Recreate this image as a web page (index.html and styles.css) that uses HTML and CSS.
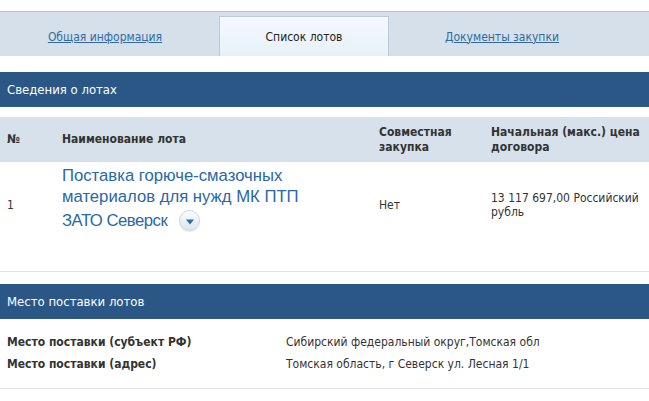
FILE: index.html
```html
<!DOCTYPE html>
<html lang="ru">
<head>
<meta charset="utf-8">
<link rel="stylesheet" href="styles.css">
</head>
<body>
<div class="page">
  <nav class="tabs">
    <a class="tab tab-first" href="#">Общая информация</a>
    <span class="tab active">Список лотов</span>
    <a class="tab tab-last" href="#">Документы закупки</a>
  </nav>

  <h2 class="section-title">Сведения о лотах</h2>

  <table class="lots">
    <thead>
      <tr>
        <th class="c-num">№</th>
        <th class="c-name">Наименование лота</th>
        <th class="c-joint">Совместная закупка</th>
        <th class="c-price">Начальная (макс.) цена договора</th>
      </tr>
    </thead>
    <tbody>
      <tr>
        <td class="c-num">1</td>
        <td class="c-name"><div class="lot-name"><a class="lot-link" href="#">Поставка горюче-смазочных материалов для нужд МК ПТП</a><span class="lot-last"><a class="lot-link" href="#">ЗАТО Северск</a><span class="expand"><svg width="10" height="6" viewBox="0 0 10 6"><path d="M1 0.5h8L5 5.5z" fill="#2b6cb0"/></svg></span></span></div></td>
        <td class="c-joint">Нет</td>
        <td class="c-price">13 117 697,00 Российский рубль</td>
      </tr>
    </tbody>
  </table>

  <h2 class="section-title second">Место поставки лотов</h2>

  <div class="places">
    <div class="place-row"><span class="place-label">Место поставки (субъект РФ)</span><span class="place-value">Сибирский федеральный округ,Томская обл</span></div>
    <div class="place-row"><span class="place-label">Место поставки (адрес)</span><span class="place-value">Томская область, г Северск ул. Лесная 1/1</span></div>
  </div>
</div>
</body>
</html>
```

FILE: styles.css
```css
html, body {
  margin: 0;
  padding: 0;
  background: #fff;
}
body {
  font-family: "DejaVu Sans Condensed", "DejaVu Sans", Verdana, sans-serif;
  font-stretch: semi-condensed;
  font-size: 12px;
  color: #333;
}
.page {
  padding-top: 11px;
}
.tabs {
  display: flex;
  height: 44px;
  background: #d6e0ea;
  border-top: 1px solid #b3c2d1;
}
.tab {
  display: flex;
  align-items: center;
  justify-content: center;
  margin-top: 4px;
  color: #2f6aa6;
  text-decoration: underline;
  font-size: 12px;
  padding-top: 1px;
}
.tab-first {
  width: 210px;
  padding-right: 9px;
}
.tab-last {
  width: 226px;
}
.tab.active {
  color: #222;
  text-decoration: none;
  background: linear-gradient(#f3f8fd, #e8f1f9);
  border: 1px solid #bfc9d2;
  border-bottom: none;
  width: 168px;
}
.section-title {
  margin: 16px 0 0;
  height: 35px;
  line-height: 35px;
  background: #2a5786;
  color: #fff;
  font-weight: normal;
  font-size: 13px;
  padding-left: 7px;
}
.section-title.second {
  margin-top: 12px;
}
.lots {
  width: 100%;
  table-layout: fixed;
  border-collapse: collapse;
  margin-top: 10px;
}
.lots th {
  background: #d6e1eb;
  text-align: left;
  font-weight: bold;
  font-size: 12px;
  color: #333;
  height: 45px;
  padding: 0;
  line-height: 15px;
  vertical-align: middle;
}
.lots td {
  height: 85px;
  padding: 0 0 24px;
  vertical-align: middle;
  border-bottom: 1px solid #e2e2e2;
  font-size: 12px;
  color: #333;
}
.lots .c-num { width: 55px; padding-left: 7px; }
.c-name { width: 317px; }
.c-joint { width: 112px; }
.lot-name {
  width: 262px;
  margin-bottom: 13px;
}
.lot-link {
  color: #2868a6;
  text-decoration: none;
  font-family: "Liberation Sans", Arial, sans-serif;
  font-stretch: normal;
  font-size: 16.7px;
  line-height: 21px;
}
.lot-last {
  display: flex;
  align-items: center;
  margin-top: 3px;
}
.lot-last .lot-link {
  letter-spacing: -0.5px;
}
.expand {
  display: inline-flex;
  align-items: center;
  justify-content: center;
  width: 21px;
  height: 21px;
  border-radius: 50%;
  background: linear-gradient(#fbfdff, #dde5ee);
  border: 1px solid #cdd6df;
  box-sizing: border-box;
  margin-left: 12px;
  box-shadow: 0 1px 1px rgba(0,0,0,0.1);
}
.expand svg { margin-top: 2px; }
.places {
  border-bottom: 1px solid #e2e2e2;
  padding: 12px 0 13px;
}
.place-row {
  display: flex;
  height: 22px;
  align-items: center;
}
.place-label {
  width: 279px;
  padding-left: 7px;
  font-weight: bold;
}
```
